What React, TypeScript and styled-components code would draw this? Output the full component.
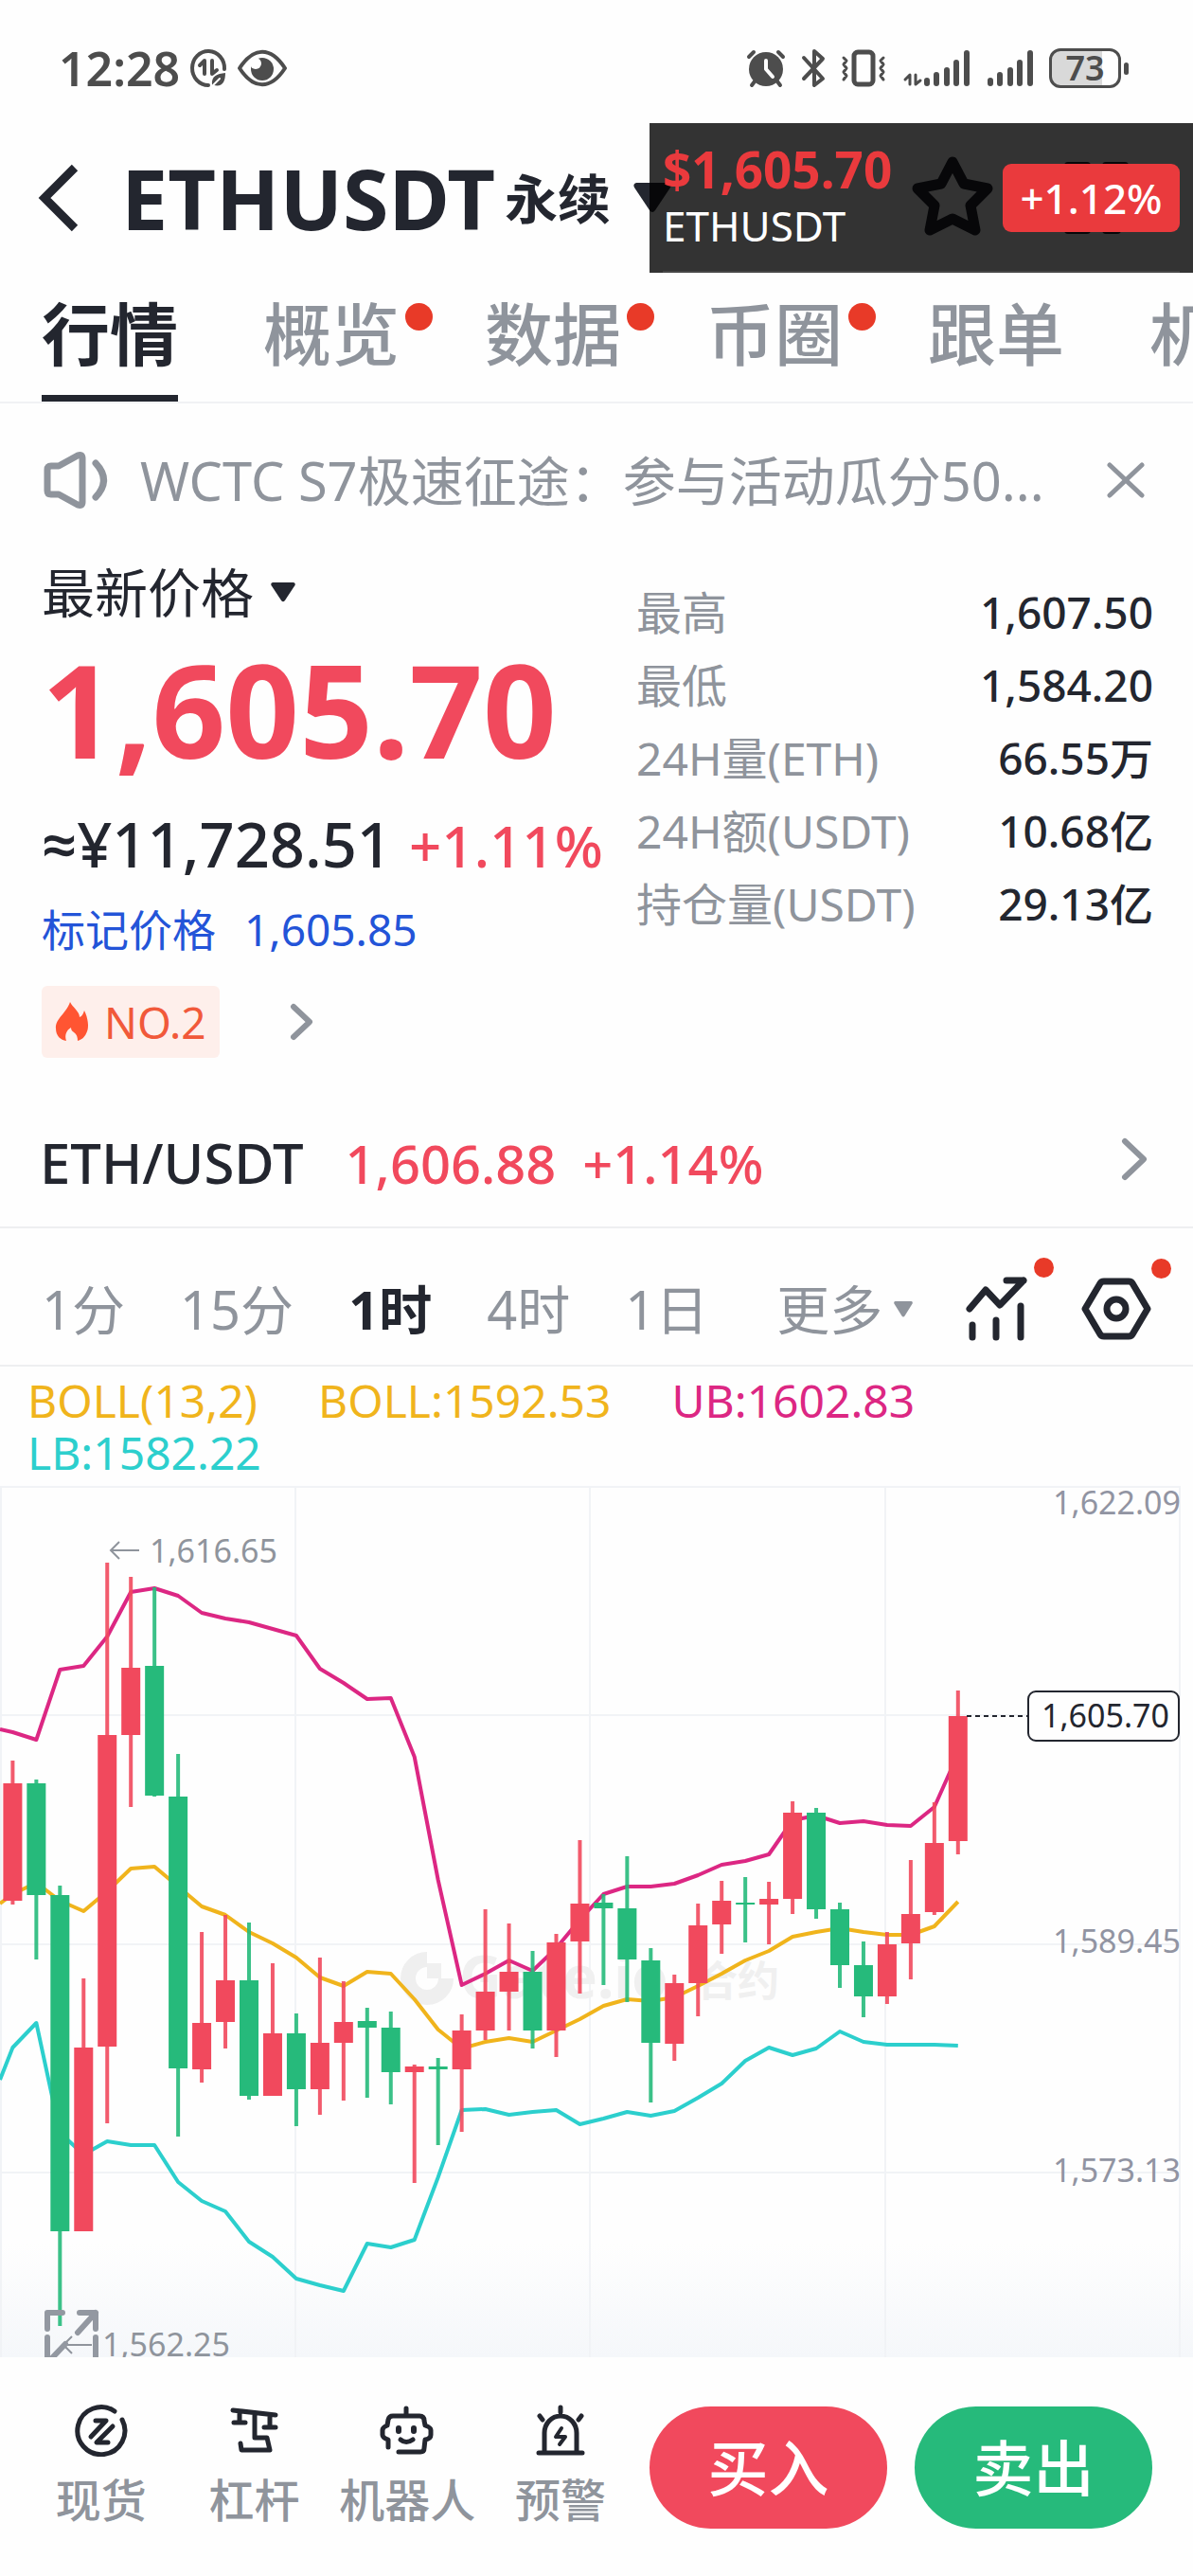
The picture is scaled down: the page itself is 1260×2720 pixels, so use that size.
import React from "react";
import styled, { createGlobalStyle } from "styled-components";

const c = {
  ink: "#23262f",
  gray: "#8f949c",
  red: "#f1495d",
  green: "#26ba7b",
  dot: "#e83a28",
  line: "#f1f2f4",
  blue: "#2354d8",
  gold: "#f0b41c",
  pink: "#dc2783",
  cyan: "#2ccfcd",
  status: "#4d4d4d",
};

const GlobalStyle = createGlobalStyle`
  *, *::before, *::after { box-sizing: border-box; }
  body {
    margin: 0;
    background: #fefefe;
    color: ${c.ink};
    font-family: "Noto Sans", "Noto Sans CJK SC", sans-serif;
    overflow-x: hidden;
  }
  button {
    margin: 0;
    padding: 0;
    border: 0;
    background: none;
    color: inherit;
    font: inherit;
    cursor: pointer;
  }
  svg { display: block; flex: none; }
  h1, p, dl, dt, dd { margin: 0; font-weight: inherit; }
`;

const Screen = styled.div`
  display: flex;
  flex-direction: column;
`;

/* ---------- status bar ---------- */

const StatusBar = styled.div`
  display: flex;
  align-items: center;
  justify-content: space-between;
  padding: 42px 68px 28px 62px;
  line-height: 60px;
  color: ${c.status};
`;
const StatusGroup = styled.div<{ $gap: number }>`
  display: flex;
  align-items: center;
  gap: ${(p) => p.$gap}px;
`;
const Clock = styled.time`
  font-size: 50px;
  font-weight: 600;
`;
const Battery = styled.div`
  position: relative;
  width: 76px;
  height: 42px;
  border: 3px solid ${c.status};
  border-radius: 12px;
  background: linear-gradient(90deg, #d9d9d9 76%, transparent 76%);
  font-size: 36px;
  font-weight: 600;
  line-height: 36px;
  text-align: center;
  margin-right: 8px;
  &::after {
    content: "";
    position: absolute;
    right: -11px;
    top: 12px;
    width: 5px;
    height: 13px;
    border-radius: 3px;
    background: ${c.status};
  }
`;

/* ---------- header ---------- */

const Header = styled.header`
  position: relative;
  display: flex;
  align-items: center;
  height: 158px;
  padding: 0 60px 0 40px;
`;
const BackButton = styled.button`
  margin-right: 45px;
`;
const PairButton = styled.button`
  display: flex;
  align-items: center;
  gap: 10px;
`;
const PairName = styled.h1`
  font-size: 88px;
  font-weight: 700;
  line-height: 100px;
`;
const PairKind = styled.span`
  font-size: 56px;
  font-weight: 700;
  line-height: 60px;
  margin-right: 14px;
`;
const HeaderTools = styled.div`
  display: flex;
  align-items: center;
  gap: 70px;
  margin-left: auto;
`;
const Ticker = styled.aside`
  position: absolute;
  top: 0;
  right: 0;
  bottom: 0;
  display: flex;
  justify-content: space-between;
  width: 574px;
  padding: 20px 14px 0;
  background: rgba(0, 0, 0, 0.8);
  &::after {
    content: "";
    position: absolute;
    left: 14px;
    right: 14px;
    bottom: 0;
    height: 2px;
    background: #464646;
  }
`;
const TickerPrice = styled.div`
  color: #ea3a3d;
  font-size: 53px;
  font-weight: 700;
  line-height: 58px;
`;
const TickerName = styled.div`
  color: #fff;
  font-size: 44px;
  line-height: 60px;
`;
const TickerChange = styled.div`
  align-self: flex-start;
  margin-top: 23px;
  width: 187px;
  border-radius: 9px;
  background: #ea3a3d;
  color: #fff;
  font-size: 44px;
  font-weight: 500;
  line-height: 72px;
  text-align: center;
`;

/* ---------- section tabs ---------- */

const Tabs = styled.nav`
  display: flex;
  gap: 90px;
  padding: 28px 0 0 44px;
  border-bottom: 2px solid ${c.line};
  overflow: hidden;
`;
const Tab = styled.button<{ $active?: boolean }>`
  position: relative;
  flex: none;
  padding-bottom: 29px;
  border-bottom: 7px solid ${(p) => (p.$active ? c.ink : "transparent")};
  color: ${(p) => (p.$active ? c.ink : c.gray)};
  font-size: 72px;
  font-weight: ${(p) => (p.$active ? 700 : 500)};
  line-height: 72px;
`;
const TabDot = styled.i`
  position: absolute;
  left: calc(100% + 6px);
  top: 4px;
  width: 29px;
  height: 29px;
  border-radius: 50%;
  background: ${c.dot};
`;

/* ---------- notice ---------- */

const Notice = styled.div`
  display: flex;
  align-items: center;
  height: 162px;
  padding: 0 50px 0 44px;
  color: ${c.gray};
`;
const NoticeText = styled.p`
  flex: 1;
  min-width: 0;
  margin: 0 60px 0 32px;
  font-size: 56px;
  line-height: 70px;
  white-space: nowrap;
  overflow: hidden;
  text-overflow: ellipsis;
`;

/* ---------- quote ---------- */

const Quote = styled.section`
  display: grid;
  grid-template-columns: minmax(0, 1fr) 546px;
  padding: 0 42px 44px 44px;
`;
const QuoteMain = styled.div`
  display: flex;
  flex-direction: column;
  align-items: flex-start;
  white-space: nowrap;
`;
const PriceKind = styled.button`
  display: flex;
  align-items: center;
  gap: 18px;
  font-size: 56px;
  line-height: 74px;
`;
const LastPrice = styled.div`
  margin-top: 12px;
  color: ${c.red};
  font-size: 136px;
  font-weight: 700;
  line-height: 150px;
`;
const Converted = styled.div`
  display: flex;
  align-items: baseline;
  gap: 18px;
  margin-top: 25px;
  font-size: 65px;
  font-weight: 500;
  line-height: 84px;
`;
const Approx = styled.span`
  font-family: "Open Sans", "Noto Sans", sans-serif;
  font-weight: 600;
`;
const Change = styled.span`
  color: ${c.red};
  font-size: 60px;
`;
const MarkPrice = styled.div`
  display: flex;
  gap: 30px;
  margin-top: 16px;
  color: ${c.blue};
  font-size: 46px;
  line-height: 60px;
`;
const RankRow = styled.div`
  display: flex;
  align-items: center;
  gap: 74px;
  margin-top: 30px;
`;
const RankBadge = styled.a`
  display: flex;
  align-items: center;
  gap: 16px;
  height: 76px;
  padding: 0 14px;
  border-radius: 6px;
  background: #feefeb;
  color: #f1593a;
  font-size: 46px;
  text-decoration: none;
`;
const Stats = styled.dl`
  padding-top: 20px;
`;
const StatRow = styled.div`
  display: flex;
  justify-content: space-between;
  font-size: 48px;
  line-height: 77px;
  white-space: nowrap;
`;
const StatLabel = styled.dt`
  color: ${c.gray};
`;
const StatValue = styled.dd`
  font-size: 46px;
  font-weight: 500;
`;

/* ---------- spot link ---------- */

const SpotLink = styled.a`
  display: flex;
  align-items: center;
  gap: 28px;
  padding: 0 48px 0 42px;
  border-bottom: 2px solid #eeeff1;
  color: ${c.ink};
  font-size: 58px;
  font-weight: 500;
  line-height: 134px;
  text-decoration: none;
`;
const SpotPrice = styled.span`
  margin-left: 16px;
  color: ${c.red};
  font-size: 56px;
`;
const SpotChange = styled.span`
  color: ${c.red};
  font-size: 56px;
`;
const SpotArrow = styled.span`
  margin-left: auto;
  padding-bottom: 8px;
`;

/* ---------- intervals ---------- */

const Intervals = styled.div`
  display: flex;
  align-items: center;
  justify-content: space-between;
  padding: 49px 42px 23px 44px;
  border-bottom: 2px solid #eeeff1;
`;
const IntervalList = styled.div`
  display: flex;
  align-items: center;
  gap: 58px;
`;
const Interval = styled.button<{ $active?: boolean }>`
  display: flex;
  align-items: center;
  gap: 12px;
  color: ${(p) => (p.$active ? c.ink : c.gray)};
  font-size: 56px;
  font-weight: ${(p) => (p.$active ? 700 : 400)};
  line-height: 70px;
  white-space: nowrap;
`;
const MoreInterval = styled(Interval)`
  margin-left: 14px;
`;
const ChartTools = styled.div`
  display: flex;
  align-items: center;
  gap: 48px;
`;
const ToolButton = styled.button`
  position: relative;
`;
const ToolDot = styled.i`
  position: absolute;
  left: calc(100% - 2px);
  top: -18px;
  width: 21px;
  height: 21px;
  border-radius: 50%;
  background: ${c.dot};
`;

/* ---------- chart ---------- */

const Legend = styled.div`
  display: flex;
  flex-wrap: wrap;
  column-gap: 64px;
  padding: 8px 240px 8px 29px;
  font-size: 48px;
  line-height: 55px;
`;
const LegendItem = styled.span<{ $color: string }>`
  color: ${(p) => p.$color};
`;
const ChartBox = styled.div`
  position: relative;
  overflow: hidden;
`;
const ChartSvg = styled.svg`
  width: 100%;
  height: auto;
  font-family: "Noto Sans", "Noto Sans CJK SC", sans-serif;
`;
const ExpandButton = styled.button`
  position: absolute;
  left: 44px;
  bottom: -12px;
`;

/* ---------- footer ---------- */

const Footer = styled.footer`
  display: flex;
  align-items: flex-start;
  padding: 49px 43px 52px 26px;
  background: #fefefe;
`;
const FooterNav = styled.nav`
  flex: 1;
  display: grid;
  grid-template-columns: repeat(4, 1fr);
  margin-right: 13px;
`;
const FooterLink = styled.a`
  display: flex;
  flex-direction: column;
  align-items: center;
  gap: 14px;
  color: ${c.gray};
  font-size: 48px;
  font-weight: 500;
  line-height: 64px;
  text-decoration: none;
  white-space: nowrap;
`;
const Actions = styled.div`
  display: flex;
  gap: 29px;
  padding-top: 3px;
`;
const TradeButton = styled.button<{ $color: string }>`
  width: 251px;
  height: 129px;
  border-radius: 65px;
  background: ${(p) => p.$color};
  color: #fff;
  font-size: 64px;
  font-weight: 500;
  line-height: 129px;
`;

/* ---------- icons ---------- */

type StrokeProps = {
  w: number;
  h: number;
  sw: number;
  color?: string;
  box?: string;
  children: React.ReactNode;
};
const Stroke = ({ w, h, sw, color = "currentColor", box, children }: StrokeProps) => (
  <svg
    width={w}
    height={h}
    viewBox={box ?? `0 0 ${w} ${h}`}
    fill="none"
    stroke={color}
    strokeWidth={sw}
    strokeLinecap="round"
    strokeLinejoin="round"
    aria-hidden="true"
  >
    {children}
  </svg>
);

const Triangle = ({ w, h, color }: { w: number; h: number; color: string }) => (
  <svg width={w} height={h} viewBox="0 0 40 32" preserveAspectRatio="none" aria-hidden="true">
    <path d="M3 0H37Q41 1 39 5L23 29Q20 33 17 29L1 5Q-1 1 3 0Z" fill={color} />
  </svg>
);

const DataSaverIcon = () => (
  <Stroke w={40} h={42} sw={4}>
    <path d="M37 22A17 18 0 1 0 20 39" />
    <path d="M16 27V13L11 18" />
    <path d="M24 13V27L29 23" />
    <path d="M24 39C23 29 29 27 38 26C38 35 35 41 26 39Z" fill="currentColor" stroke="none" />
    <path d="M24 40L32 32" stroke="#fefefe" strokeWidth={2} />
  </Stroke>
);
const EyeIcon = () => (
  <Stroke w={54} h={40} sw={4}>
    <path d="M3 20C18 -3 36 -3 51 20C36 43 18 43 3 20Z" />
    <circle cx={27} cy={21} r={12} fill="currentColor" stroke="none" />
    <circle cx={20} cy={15} r={6} fill="#fefefe" stroke="none" />
  </Stroke>
);
const AlarmIcon = () => (
  <Stroke w={42} h={42} sw={4}>
    <circle cx={21} cy={22} r={18} fill="currentColor" stroke="none" />
    <path d="M21 13V22L28 30" stroke="#fefefe" />
    <path d="M3 9L8 4M39 9L34 4M6 39L9 35M36 39L33 35" />
  </Stroke>
);
const BluetoothIcon = () => (
  <Stroke w={26} h={42} sw={4}>
    <path d="M3 10L23 32L14 39V3L23 11L3 32" />
  </Stroke>
);
const VibrateIcon = () => (
  <Stroke w={48} h={42} sw={4}>
    <rect x={14} y={4} width={20} height={34} rx={4} strokeWidth={5} />
    <path d="M3 10L6 13L3 17L6 21L3 25L6 29L3 33M45 10L42 13L45 17L42 21L45 25L42 29L45 33" strokeWidth={3} />
  </Stroke>
);
const SignalIcon = ({ data }: { data?: boolean }) => (
  <Stroke w={data ? 74 : 50} h={42} sw={6} box={data ? "-23 0 74 42" : undefined}>
    <path d="M4 34V37M14 28V37M25 23V37M35 15V37M46 5V37" />
    {data && <path d="M-14 38V28L-19 33M-8 28V38L-3 34" strokeWidth={3} />}
  </Stroke>
);
const BackIcon = () => (
  <svg width={43} height={72} viewBox="0 0 43 72" fill="none" stroke={c.ink} strokeWidth={9} aria-hidden="true">
    <path d="M39 4L7 36L39 68" />
  </svg>
);
const StarIcon = () => (
  <Stroke w={92} h={92} sw={11} color={c.ink}>
    <path d="M46 8L58 31L83 36L65 54L70 80L46 68L22 80L27 54L9 36L34 31Z" />
  </Stroke>
);
const GridIcon = () => (
  <Stroke w={78} h={78} sw={8} color={c.ink}>
    <path d="M6 5H26V28H6ZM46 5H66V28H46ZM6 48H26V73H6ZM46 48H58V73H46Z" />
  </Stroke>
);
const SpeakerIcon = () => (
  <Stroke w={72} h={64} sw={7}>
    <path d="M10 17H18L38 6Q43 4 43 9V55Q43 60 38 58L18 47H10Q6 47 6 43V21Q6 17 10 17Z" />
    <path d="M57 14Q74 32 57 50" />
  </Stroke>
);
const CloseIcon = () => (
  <Stroke w={42} h={42} sw={5}>
    <path d="M4 5L38 37M38 5L4 37" />
  </Stroke>
);
const FlameIcon = () => (
  <svg width={36} height={42} viewBox="0 0 36 42" aria-hidden="true">
    <path
      fill="#ff5532"
      d="M16 0C19 6 26 10 26 16C29 15 30 12 31 9C35 17 36 26 34 31C32 37 28 40 24 41C24 37 23 34 20 32C18 31 17 29 17 27C12 30 10 35 12 41C6 40 1 36 1 28C0 18 12 12 16 0Z"
    />
  </svg>
);
const ChevronIcon = ({ w, h }: { w: number; h: number }) => (
  <Stroke w={w} h={h} sw={6} color={c.gray}>
    <path d={`M4 4L${w - 4} ${h / 2}L4 ${h - 4}`} />
  </Stroke>
);
const IndicatorIcon = () => (
  <Stroke w={76} h={72} sw={7} color={c.ink}>
    <path d="M6 36L23 16L38 32L63 6M45 6H63" />
    <path d="M9 53V66M34 48V66M60 33V66" />
  </Stroke>
);
const SettingsIcon = () => (
  <Stroke w={76} h={70} sw={7} color={c.ink} box="2 0 76 70">
    <path d="M6 35L22 8Q23 6 26 6H52Q55 6 56 8L72 35L56 62Q55 64 52 64H26Q23 64 22 62Z" />
    <circle cx={39} cy={35} r={10} />
  </Stroke>
);
const SpotIcon = () => (
  <Stroke w={56} h={56} sw={5} color={c.ink}>
    <path d="M42 8A25 25 0 1 0 50 17" />
    <path d="M22 18H33L17 35M40 24L23 41H35" />
  </Stroke>
);
const LeverIcon = () => (
  <Stroke w={56} h={56} sw={5} color={c.ink}>
    <path d="M5 7L50 12M12 9V20M6 20H18M44 12V25M38 25H50M28 10V36H41L44 49H14L13 42" />
  </Stroke>
);
const RobotIcon = () => (
  <Stroke w={60} h={56} sw={5} color={c.ink}>
    <path d="M29 5V12M10 46V38Q4 36 4 33V28Q4 25 9 23L10 17Q11 13 15 13H43Q48 13 48 18L49 23Q55 25 55 28V33Q55 37 49 38L48 47Q48 51 44 51H21" />
    <path d="M21 26V29M37 26V29" strokeWidth={6} />
    <path d="M23 38Q29 43 36 38" />
  </Stroke>
);
const AlertIcon = () => (
  <Stroke w={56} h={56} sw={5} color={c.ink}>
    <path d="M28 4V9M6 13L9 17M50 13L47 17M5 52H51M11 51V31A17 18 0 0 1 45 31V51" />
    <path d="M29 26L23 35H33L27 43" strokeWidth={4} />
  </Stroke>
);
const ExpandIcon = () => (
  <Stroke w={64} h={66} sw={6} color="#9398a1">
    <path d="M6 24V7H22M40 7H57V24M57 7L38 28M6 33V60H24M57 33V60H40M8 58L25 40" />
  </Stroke>
);

/* ---------- chart data ---------- */

// [rising, wick top, body top, body bottom, wick bottom]
type Candle = [0 | 1, number, number, number, number];
const candles: Candle[] = [
  [1, 290, 314, 438, 442], [0, 310, 314, 432, 500], [0, 422, 432, 787, 887], [1, 520, 593, 787, 787],
  [1, 81, 263, 592, 673], [1, 96, 192, 263, 339], [0, 107, 190, 327, 328], [0, 283, 328, 615, 687],
  [1, 471, 567, 616, 630], [1, 453, 522, 566, 594], [0, 461, 522, 644, 648], [1, 504, 578, 644, 644],
  [0, 557, 578, 637, 676], [1, 498, 588, 637, 664], [1, 523, 566, 588, 649], [0, 551, 565, 572, 646],
  [0, 555, 572, 619, 653], [1, 611, 613, 619, 736], [0, 604, 613, 616, 696], [1, 558, 575, 616, 682],
  [1, 447, 534, 575, 585], [1, 462, 513, 534, 575], [0, 491, 513, 575, 594], [1, 473, 482, 575, 603],
  [1, 374, 441, 481, 536], [0, 431, 440, 446, 527], [0, 391, 446, 500, 545], [0, 488, 501, 588, 651],
  [1, 516, 525, 589, 607], [1, 441, 464, 525, 560], [1, 417, 438, 463, 494], [0, 413, 440, 442, 482],
  [1, 418, 436, 442, 484], [1, 333, 345, 436, 452], [0, 340, 345, 447, 457], [0, 440, 447, 506, 530],
  [0, 481, 506, 539, 561], [1, 471, 484, 539, 547], [1, 395, 452, 483, 521], [1, 334, 377, 450, 453],
  [1, 216, 243, 375, 389],
];
const upper = [260, 268, 194, 190, 159, 112, 108, 116, 134, 140, 144, 151, 158, 193, 208, 225, 224, 286, 416, 527, 515, 501, 512, 488, 458, 431, 423, 423, 420, 411, 400, 396, 389, 353, 348, 356, 354, 358, 359, 339, 283];
const middle = [431, 419, 438, 449, 428, 404, 402, 423, 444, 453, 471, 483, 498, 519, 528, 513, 515, 542, 574, 594, 587, 583, 587, 575, 563, 549, 542, 544, 540, 528, 515, 501, 491, 476, 471, 467, 471, 474, 474, 465, 439];
const lower = [593, 567, 683, 706, 692, 696, 696, 735, 755, 766, 798, 814, 837, 844, 850, 800, 804, 796, 730, 659, 658, 664, 661, 659, 674, 668, 661, 665, 660, 646, 631, 607, 593, 601, 594, 576, 587, 590, 590, 590, 591];

const candleX = (i: number) => 13.4 + i * 24.96;
const band = (start: number, ys: number[]) =>
  `0,${start} ` + ys.map((y, i) => `${candleX(i)},${y}`).join(" ");

const KLineChart = () => (
  <ChartSvg viewBox="0 0 1260 920" role="img" aria-label="ETHUSDT 1时 K线">
    <defs>
      <linearGradient id="floor" x1="0" y1="0" x2="0" y2="1">
        <stop offset="0" stopColor="#fefefe" />
        <stop offset="1" stopColor="#f5f7fa" />
      </linearGradient>
    </defs>
    <rect x={0} y={800} width={1260} height={120} fill="url(#floor)" />
    <g stroke="#f1f3f6" strokeWidth={2}>
      {[1, 242, 484, 725].map((y) => (
        <line key={y} x1={0} x2={1246} y1={y} y2={y} />
      ))}
      {[1, 312, 623, 935, 1246].map((x) => (
        <line key={x} x1={x} x2={x} y1={0} y2={920} />
      ))}
    </g>
    <g fill="#f0f0f0" fontWeight={700}>
      <path d="M451 500A20 20 0 1 0 471 520" fill="none" stroke="#efefef" strokeWidth={16} />
      <rect x={451} y={504} width={15} height={16} />
      <text x={485} y={541} fontSize={62}>Gate.io</text>
      <text x={735} y={539} fontSize={44}>合约</text>
    </g>
    <g fill="none" strokeWidth={4} strokeLinejoin="round">
      <polyline points={band(257, upper)} stroke={c.pink} />
      <polyline points={band(441, middle)} stroke={c.gold} />
      <polyline points={band(627, lower)} stroke={c.cyan} />
    </g>
    {candles.map(([up, top, open, close, bottom], i) => (
      <g key={i} fill={up ? c.red : c.green}>
        <rect x={candleX(i) - 2} y={top} width={4} height={bottom - top} opacity={0.9} />
        <rect x={candleX(i) - 10} y={open} width={20} height={close - open} />
      </g>
    ))}
    <g fill={c.gray} fontSize={34}>
      <text x={158} y={81}>1,616.65</text>
      <text x={108} y={919}>1,562.25</text>
      <g fill="#9194a2" textAnchor="end">
        <text x={1247} y={30}>1,622.09</text>
        <text x={1247} y={493}>1,589.45</text>
        <text x={1247} y={735}>1,573.13</text>
      </g>
    </g>
    <path d="M147 68H117M126 59L117 68L126 77M97 907H67M76 898L67 907L76 916" fill="none" stroke={c.gray} strokeWidth={2} />
    <line x1={1021} x2={1085} y1={243} y2={243} stroke={c.ink} strokeWidth={2} strokeDasharray="5 4" />
    <rect x={1086} y={217} width={159} height={52} rx={8} fill="#fefefe" stroke={c.ink} strokeWidth={2} />
    <text x={1100} y={255} fontSize={34} fill={c.ink}>1,605.70</text>
  </ChartSvg>
);

/* ---------- page ---------- */

const tabs = [
  { name: "行情", active: true },
  { name: "概览", dot: true },
  { name: "数据", dot: true },
  { name: "币圈", dot: true },
  { name: "跟单" },
  { name: "机" },
];
const stats = [
  ["最高", "1,607.50"],
  ["最低", "1,584.20"],
  ["24H量(ETH)", "66.55万"],
  ["24H额(USDT)", "10.68亿"],
  ["持仓量(USDT)", "29.13亿"],
];
const intervals = ["1分", "15分", "1时", "4时", "1日"];
const links = [
  { name: "现货", icon: <SpotIcon /> },
  { name: "杠杆", icon: <LeverIcon /> },
  { name: "机器人", icon: <RobotIcon /> },
  { name: "预警", icon: <AlertIcon /> },
];

export default function App() {
  return (
    <>
      <GlobalStyle />
      <Screen>
        <StatusBar>
          <StatusGroup $gap={10}>
            <Clock>12:28</Clock>
            <DataSaverIcon />
            <EyeIcon />
          </StatusGroup>
          <StatusGroup $gap={16}>
            <AlarmIcon />
            <BluetoothIcon />
            <VibrateIcon />
            <SignalIcon data />
            <SignalIcon />
            <Battery>73</Battery>
          </StatusGroup>
        </StatusBar>

        <Header>
          <BackButton aria-label="返回">
            <BackIcon />
          </BackButton>
          <PairButton>
            <PairName>ETHUSDT</PairName>
            <PairKind>永续</PairKind>
            <Triangle w={40} h={32} color={c.ink} />
          </PairButton>
          <HeaderTools>
            <button aria-label="收藏">
              <StarIcon />
            </button>
            <button aria-label="布局">
              <GridIcon />
            </button>
          </HeaderTools>
          <Ticker>
            <div>
              <TickerPrice>$1,605.70</TickerPrice>
              <TickerName>ETHUSDT</TickerName>
            </div>
            <TickerChange>+1.12%</TickerChange>
          </Ticker>
        </Header>

        <Tabs>
          {tabs.map((t) => (
            <Tab key={t.name} $active={t.active}>
              {t.name}
              {t.dot && <TabDot />}
            </Tab>
          ))}
        </Tabs>

        <Notice>
          <SpeakerIcon />
          <NoticeText>WCTC S7极速征途：参与活动瓜分50...</NoticeText>
          <button aria-label="关闭">
            <CloseIcon />
          </button>
        </Notice>

        <Quote>
          <QuoteMain>
            <PriceKind>
              最新价格
              <Triangle w={26} h={21} color={c.ink} />
            </PriceKind>
            <LastPrice>1,605.70</LastPrice>
            <Converted>
              <span>
                <Approx>≈</Approx>¥11,728.51
              </span>
              <Change>+1.11%</Change>
            </Converted>
            <MarkPrice>
              <span>标记价格</span>
              <span>1,605.85</span>
            </MarkPrice>
            <RankRow>
              <RankBadge href="#rank">
                <FlameIcon />
                NO.2
              </RankBadge>
              <ChevronIcon w={25} h={40} />
            </RankRow>
          </QuoteMain>
          <Stats>
            {stats.map(([label, value]) => (
              <StatRow key={label}>
                <StatLabel>{label}</StatLabel>
                <StatValue>{value}</StatValue>
              </StatRow>
            ))}
          </Stats>
        </Quote>

        <SpotLink href="#spot">
          ETH/USDT
          <SpotPrice>1,606.88</SpotPrice>
          <SpotChange>+1.14%</SpotChange>
          <SpotArrow>
            <ChevronIcon w={28} h={46} />
          </SpotArrow>
        </SpotLink>

        <Intervals>
          <IntervalList>
            {intervals.map((name) => (
              <Interval key={name} $active={name === "1时"}>
                {name}
              </Interval>
            ))}
            <MoreInterval>
              更多
              <Triangle w={20} h={17} color={c.gray} />
            </MoreInterval>
          </IntervalList>
          <ChartTools>
            <ToolButton aria-label="指标">
              <IndicatorIcon />
              <ToolDot />
            </ToolButton>
            <ToolButton aria-label="设置">
              <SettingsIcon />
              <ToolDot />
            </ToolButton>
          </ChartTools>
        </Intervals>

        <Legend>
          <LegendItem $color={c.gold}>BOLL(13,2)</LegendItem>
          <LegendItem $color={c.gold}>BOLL:1592.53</LegendItem>
          <LegendItem $color={c.pink}>UB:1602.83</LegendItem>
          <LegendItem $color={c.cyan}>LB:1582.22</LegendItem>
        </Legend>

        <ChartBox>
          <KLineChart />
          <ExpandButton aria-label="全屏">
            <ExpandIcon />
          </ExpandButton>
        </ChartBox>

        <Footer>
          <FooterNav>
            {links.map((l) => (
              <FooterLink key={l.name} href={`#${l.name}`}>
                {l.icon}
                {l.name}
              </FooterLink>
            ))}
          </FooterNav>
          <Actions>
            <TradeButton $color={c.red}>买入</TradeButton>
            <TradeButton $color={c.green}>卖出</TradeButton>
          </Actions>
        </Footer>
      </Screen>
    </>
  );
}
